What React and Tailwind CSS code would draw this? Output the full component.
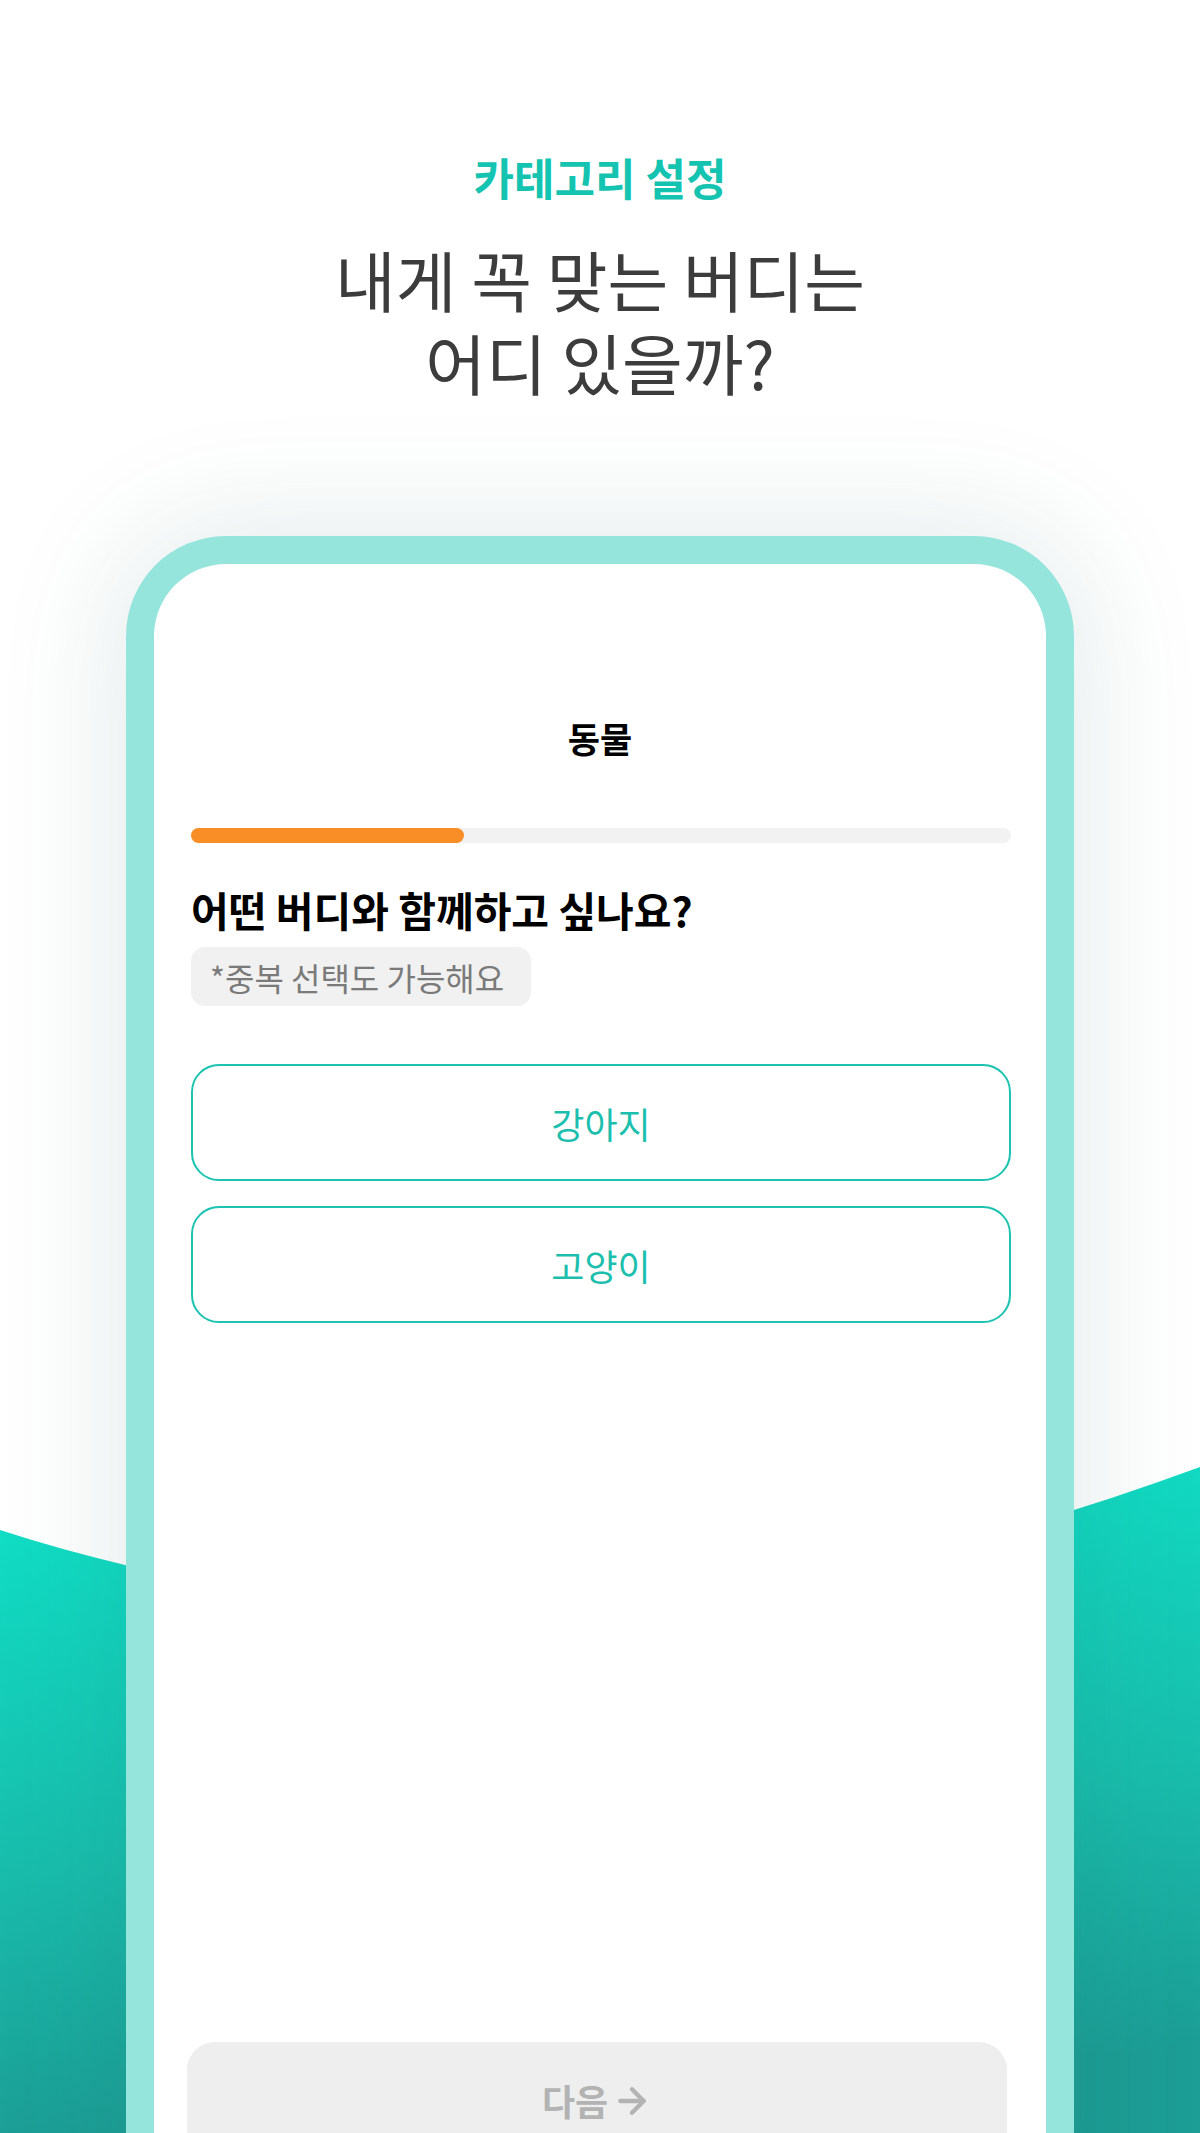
import { ArrowRight } from 'lucide-react'

const options = ['강아지', '고양이']

export default function App() {
  return (
    <div className="relative w-full h-[2133px] overflow-hidden bg-white font-['Noto_Sans_CJK_KR','Noto_Sans',sans-serif]">
      {/* teal wave behind the phone */}
      <svg
        className="absolute left-0 top-[1400px] w-[1200px] h-[733px]"
        viewBox="0 0 1200 733"
        preserveAspectRatio="none"
      >
        <defs>
          <linearGradient id="wave" x1="0" y1="0" x2="0.15" y2="1">
            <stop offset="0" stopColor="#0fe3c9" />
            <stop offset="0.6" stopColor="#19bcab" />
            <stop offset="1" stopColor="#1c9d95" />
          </linearGradient>
        </defs>
        <path d="M0,130 C400,260 800,215 1200,67 L1200,733 L0,733 Z" fill="url(#wave)" />
      </svg>

      <div className="relative flex flex-col items-center pt-[151px]">
        <p className="text-[44px] leading-[52px] font-bold text-[#14c4b1]">카테고리 설정</p>
        <h1 className="mt-[34px] flex flex-col items-center text-[66px] leading-[83px] font-normal text-[#3c3c3c]">
          <span>내게 꼭 맞는 버디는</span>
          <span>어디 있을까?</span>
        </h1>

        {/* phone */}
        <div className="mt-[133px] w-[948px] h-[1700px] rounded-t-[100px] border-[28px] border-b-0 border-[#96e5dc] bg-white shadow-[0_0_120px_10px_rgba(30,100,90,0.13)]">
          <div className="flex flex-col px-[37px] pt-[152px]">
            <p className="text-center text-[35px] leading-[44px] font-bold text-black">동물</p>

            <div className="mt-[68px] h-[15px] w-[820px] rounded-full bg-[#f2f2f2]">
              <div className="h-full w-1/3 rounded-full bg-[#f98e27]" />
            </div>

            <p className="mt-[42px] text-[41px] leading-[48px] font-bold text-black">어떤 버디와 함께하고 싶나요?</p>

            <div className="mt-[14px] self-start flex items-center h-[59px] pl-[19px] pr-[27px] rounded-[14px] bg-[#f1f1f1]">
              <span className="text-[32px] leading-[38px] text-[#7a7a7a]">*중복 선택도 가능해요</span>
            </div>

            <div className="mt-[58px] flex flex-col gap-[25px] w-[820px]">
              {options.map((o) => (
                <button
                  key={o}
                  className="h-[117px] rounded-[28px] border-2 border-[#1cc3b0] bg-white text-[36px] text-[#1cbfae]"
                >
                  {o}
                </button>
              ))}
            </div>

            <button className="mt-[719px] -ml-[4px] h-[130px] w-[820px] rounded-[28px] bg-[#eeeeee] flex justify-center pt-[34px] gap-1 text-[36px] leading-[48px] font-bold text-[#b3b3b3]">
              다음
              <ArrowRight className="w-[40px] h-[40px] mt-[5px]" strokeWidth={2.6} />
            </button>
          </div>
        </div>
      </div>
    </div>
  )
}
